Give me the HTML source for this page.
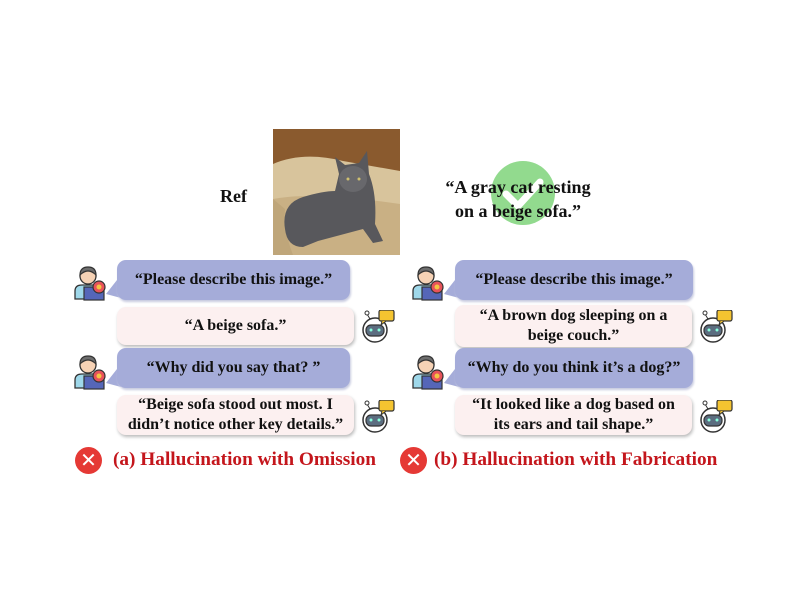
<!DOCTYPE html>
<html><head><meta charset="utf-8"><style>
body{margin:0;width:800px;height:600px;background:#fff;position:relative;overflow:hidden;font-family:"Liberation Serif",serif;font-weight:bold;color:#111}
.a{position:absolute}
.b{position:absolute;border-radius:9px;display:flex;align-items:center;justify-content:center;text-align:center;font-size:16px;line-height:20px}
.blue{background:#a5acd9;box-shadow:1px 2px 2px #c8cbe0}
.pink{background:#fcf0f0;box-shadow:1px 2px 3px #bbb}
.lbl{position:absolute;font-size:19.3px;color:#c4161c;white-space:nowrap}
.x{position:absolute;width:27px;height:27px;border-radius:50%;background:#e53935;color:#fff;font-size:20px;line-height:27px;text-align:center;font-family:"DejaVu Sans",sans-serif}
</style></head><body>
<div class="a" style="left:220px;top:186px;font-size:18px">Ref</div>
<svg class="a" style="left:273px;top:129px" width="127" height="126" viewBox="0 0 127 126">
<rect width="127" height="126" fill="#8a5a2e"/>
<path d="M0 35 Q30 22 70 32 L127 42 L127 126 L0 126Z" fill="#d8c49c"/>
<path d="M0 70 Q40 62 127 75 L127 126 L0 126Z" fill="#c9b084"/>
<path d="M0 70 L0 126 L20 126 Q10 100 12 80Z" fill="#bfa67a"/>
<path d="M12 100 Q8 75 30 68 Q50 62 62 62 L66 45 L62 28 L72 36 L86 34 L94 22 L96 45 Q104 65 102 95 L110 112 L100 114 L90 100 L60 108 L45 112 L30 118 Q14 118 12 100Z" fill="#58585c"/>
<ellipse cx="80" cy="50" rx="14" ry="13" fill="#68686c"/>
<circle cx="75" cy="50" r="1.5" fill="#cfc070"/><circle cx="86" cy="50" r="1.5" fill="#cfc070"/>
</svg>
<svg class="a" style="left:490px;top:160px" width="66" height="66"><circle cx="33" cy="33" r="32" fill="#7fd37a" opacity=".85"/><path d="M16 34 L28 46 L50 22" stroke="#fff" stroke-width="7" fill="none" stroke-linecap="round" stroke-linejoin="round"/></svg>
<div class="a" style="left:420px;top:175px;width:196px;text-align:center;font-size:18px;line-height:24px">“A gray cat resting<br>on a beige sofa.”</div>

<svg width="0" height="0" style="position:absolute"><defs>
<g id="p"><circle cx="16" cy="11" r="8" fill="#f6d2b5" stroke="#333" stroke-width="1.3"/><path d="M8 10 Q8 2 16 2 Q24 2 24 10 Q20 6 16 6 Q12 6 8 10Z" fill="#6d6d6d" stroke="#333" stroke-width="1.2"/><path d="M3 34 L3 26 Q3 20 10 20 L22 20 Q28 20 28 26 L28 34Z" fill="#9fd8ea" stroke="#333" stroke-width="1.3"/><rect x="12" y="22" width="20" height="13" fill="#5566b8" stroke="#333" stroke-width="1.2"/><circle cx="27" cy="22" r="6" fill="#e8535a" stroke="#333" stroke-width="1.2"/><circle cx="27" cy="22" r="2.5" fill="#f4c542"/></g>
<g id="r"><circle cx="14" cy="20" r="12" fill="#fff" stroke="#333" stroke-width="1.5"/><rect x="5" y="15" width="18" height="11" rx="5" fill="#5b6d80" stroke="#333" stroke-width="1.2"/><circle cx="10" cy="20" r="1.5" fill="#8fd"/><circle cx="18" cy="20" r="1.5" fill="#8fd"/><line x1="9" y1="9" x2="6" y2="4" stroke="#333"/><circle cx="6" cy="3" r="2" fill="#fff" stroke="#333"/><rect x="18" y="0" width="15" height="11" rx="2" fill="#f4c430" stroke="#333" stroke-width="1.2"/><path d="M21 11 L20 15 L25 11" fill="#f4c430" stroke="#333"/></g>
</defs></svg>

<svg class="a" style="left:72px;top:265px" width="36" height="36"><use href="#p"/></svg>
<svg class="a" style="left:72px;top:354px" width="36" height="36"><use href="#p"/></svg>
<svg class="a" style="left:361px;top:310px" width="36" height="36"><use href="#r"/></svg>
<svg class="a" style="left:361px;top:400px" width="36" height="36"><use href="#r"/></svg>
<svg class="a" style="left:105px;top:280px" width="16" height="20"><path d="M12 0 L1 14 L16 18Z" fill="#a5acd9"/></svg>
<svg class="a" style="left:105px;top:369px" width="16" height="20"><path d="M12 0 L1 14 L16 18Z" fill="#a5acd9"/></svg>
<div class="b blue" style="left:117px;top:260px;width:233px;height:40px">“Please describe this image.”</div>
<div class="b pink" style="left:117px;top:307px;width:237px;height:38px">“A beige sofa.”</div>
<div class="b blue" style="left:117px;top:348px;width:233px;height:40px">“Why did you say that? ”</div>
<div class="b pink" style="left:117px;top:395px;width:237px;height:40px">“Beige sofa stood out most. I<br>didn’t notice other key details.”</div>
<div class="x" style="left:75px;top:447px">✕</div>
<div class="lbl" style="left:113px;top:449px">(a) Hallucination with Omission</div>

<svg class="a" style="left:410px;top:265px" width="36" height="36"><use href="#p"/></svg>
<svg class="a" style="left:410px;top:354px" width="36" height="36"><use href="#p"/></svg>
<svg class="a" style="left:699px;top:310px" width="36" height="36"><use href="#r"/></svg>
<svg class="a" style="left:699px;top:400px" width="36" height="36"><use href="#r"/></svg>
<svg class="a" style="left:443px;top:280px" width="16" height="20"><path d="M12 0 L1 14 L16 18Z" fill="#a5acd9"/></svg>
<svg class="a" style="left:443px;top:369px" width="16" height="20"><path d="M12 0 L1 14 L16 18Z" fill="#a5acd9"/></svg>
<div class="b blue" style="left:455px;top:260px;width:238px;height:40px">“Please describe this image.”</div>
<div class="b pink" style="left:455px;top:305px;width:237px;height:42px">“A brown dog sleeping on a<br>beige couch.”</div>
<div class="b blue" style="left:455px;top:348px;width:238px;height:40px">“Why do you think it’s a dog?”</div>
<div class="b pink" style="left:455px;top:395px;width:237px;height:40px">“It looked like a dog based on<br>its ears and tail shape.”</div>
<div class="x" style="left:400px;top:447px">✕</div>
<div class="lbl" style="left:434px;top:449px">(b) Hallucination with Fabrication</div>
</body></html>
